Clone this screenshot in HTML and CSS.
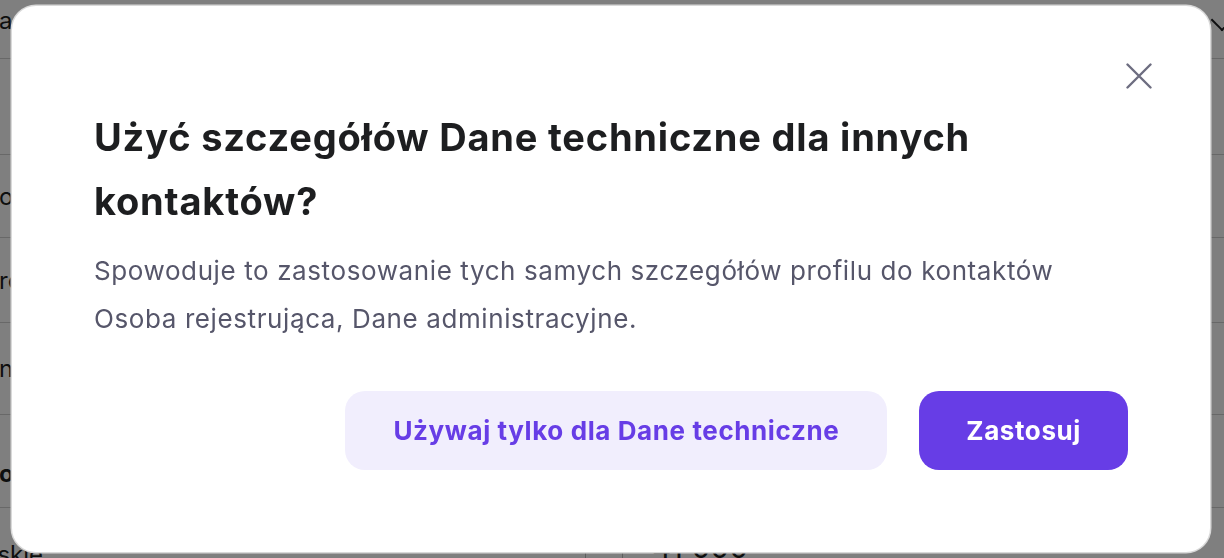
FILE: index.html
```html
<!DOCTYPE html>
<html lang="pl">
<head>
    <meta charset="UTF-8">
    <meta name="viewport" content="width=device-width, initial-scale=1.0">
    <title>Dane kontaktowe</title>
    <link rel="stylesheet" href="styles.css">
</head>
<body>
<!-- Page behind the dialog -->
<div class="page">
    <div class="page-row row-1"><span class="row-label">adres</span><span class="row-chevron"></span></div>
    <div class="page-row row-2"></div>
    <div class="page-row row-3"><span class="row-label">osoba</span></div>
    <div class="page-row row-4"><span class="row-label">rodzaj</span></div>
    <div class="page-row row-5"><span class="row-label">nazwa</span></div>
    <div class="page-row row-6"><span class="row-label bold">ogólne</span></div>
    <div class="page-row row-7">
        <span class="row-label">Polskie</span>
        <span class="select-arrow">&#9662;</span>
        <span class="field-sep"></span>
        <span class="field-sep second"></span>
        <span class="field-value">41 000</span>
    </div>
</div>

<!-- Dialog -->
<div class="overlay">
    <div class="modal" role="dialog" aria-modal="true">
        <div class="modal-header">
            <button class="close-btn" aria-label="Zamknij">
                <svg width="26" height="26" viewBox="0 0 26 26" fill="none">
                    <path d="M1.5 1.5 L24.5 24.5 M24.5 1.5 L1.5 24.5" stroke="currentColor" stroke-width="2.4" stroke-linecap="round"/>
                </svg>
            </button>
        </div>
        <h2 class="modal-title">Użyć szczegółów Dane techniczne dla innych kontaktów?</h2>
        <p class="modal-text">Spowoduje to zastosowanie tych samych szczegółów profilu do kontaktów Osoba rejestrująca, Dane administracyjne.</p>
        <div class="modal-actions">
            <button class="btn btn-secondary">Używaj tylko dla Dane techniczne</button>
            <button class="btn btn-primary">Zastosuj</button>
        </div>
    </div>
</div>
</body>
</html>
```

FILE: styles.css
```css
:root {
    --primary: #673de6;
    --primary-light: #f1eefd;
    --title: #1d1e20;
    --text: #56566a;
    --icon: #6d6d80;
}

html {
    overflow: hidden;
}

body {
    margin: 0;
    font-family: 'Inter', 'Liberation Sans', sans-serif;
    background: #fff;
    overflow: hidden;
    height: 558px;
}

/* Page behind */
.page {
    display: flex;
    flex-direction: column;
}

.page-row {
    position: relative;
    display: flex;
    align-items: center;
    border-bottom: 1px solid #d0d0d0;
    font-size: 24px;
    color: #1d1e20;
    white-space: nowrap;
}

.row-label {
    margin-left: -1px;
}

.row-label.bold {
    font-weight: 700;
}

.row-1 { height: 58px; }
.row-1 .row-label { padding-bottom: 18px; }
.row-2 { height: 95px; }
.row-3 { height: 82px; }
.row-4 { height: 84px; }
.row-5 { height: 91px; }
.row-6 { height: 92px; }
.row-6 .row-label { padding-top: 25px; }

.row-7 {
    height: 43px;
    border-bottom: none;
    align-items: flex-start;
    padding-top: 32px;
}

.row-7 .row-label {
    flex: none;
    margin-left: -38px;
    width: 570px;
}

.row-chevron {
    position: absolute;
    right: -6px;
    top: 12px;
    width: 14px;
    height: 14px;
    border-right: 2px solid #1d1e20;
    border-bottom: 2px solid #1d1e20;
    transform: rotate(45deg);
}

.select-arrow {
    flex: none;
    width: 16px;
    text-align: center;
    font-size: 20px;
    margin-top: -6px;
}

.field-sep {
    flex: none;
    width: 1px;
    height: 40px;
    margin-left: 37px;
    margin-top: -10px;
    background: #bcbcbc;
}

.field-sep.second {
    margin-left: 36px;
}

.field-value {
    margin-left: 29px;
    font-size: 30px;
    margin-top: -11px;
}

/* Overlay + dialog */
.overlay {
    position: fixed;
    inset: 0;
    background: rgba(0, 0, 0, 0.5);
    display: flex;
    align-items: center;
    justify-content: center;
}

.modal {
    box-sizing: border-box;
    width: 1198px;
    margin-left: -2px;
    padding: 50px 82px 82px;
    background: #fff;
    border-radius: 24px;
    box-shadow: 0 0 0 1.5px #d9d9d9;
}

.modal-header {
    display: flex;
    justify-content: flex-end;
    margin-right: -31px;
}

.close-btn {
    width: 40px;
    height: 40px;
    padding: 0;
    border: none;
    background: none;
    color: var(--icon);
    display: flex;
    align-items: center;
    justify-content: center;
    cursor: pointer;
}

.modal-title {
    margin: 9px 0 0;
    max-width: 960px;
    font-size: 38px;
    line-height: 64px;
    font-weight: 700;
    color: var(--title);
    letter-spacing: 0.8px;
}

.modal-text {
    margin: 14px 0 0;
    max-width: 990px;
    font-size: 26px;
    line-height: 48px;
    color: var(--text);
    letter-spacing: 0.6px;
}

.modal-actions {
    display: flex;
    justify-content: flex-end;
    gap: 32px;
    margin-top: 48px;
}

.btn {
    height: 79px;
    padding: 0 48px;
    border: none;
    border-radius: 20px;
    font-family: inherit;
    font-size: 26px;
    font-weight: 700;
    letter-spacing: 0.6px;
    cursor: pointer;
}

.btn-secondary {
    background: var(--primary-light);
    color: var(--primary);
}

.btn-primary {
    padding: 0 47px;
    background: var(--primary);
    color: #fff;
}
```
